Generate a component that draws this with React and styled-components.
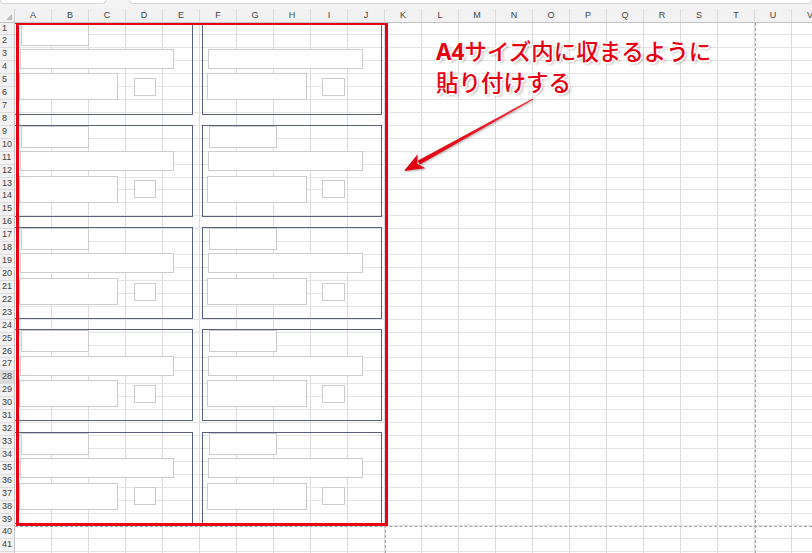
import React from 'react'
import styled, { createGlobalStyle } from 'styled-components'

const COLS = 'ABCDEFGHIJKLMNOPQRSTUV'.split('')
const ROWS = Array.from({ length: 41 }, (_, i) => i + 1)
const ROW_H = 12.93
const COL_W = 37

const GlobalStyle = createGlobalStyle`
  html, body {
    margin: 0;
    padding: 0;
    background: #fff;
  }
  body {
    font-family: "Liberation Sans", Arial, sans-serif;
    overflow: hidden;
  }
`

const Window = styled.div`
  width: 812px;
  height: 553px;
  overflow: hidden;
  background: #fff;
  display: flex;
  flex-direction: column;
`

const TopBar = styled.div`
  height: 9px;
  flex: none;
  background: #f3f3f3;
  display: flex;
  align-items: flex-start;
  gap: 23px;
`

const BarBox = styled.div`
  height: 3px;
  width: ${p => p.$w ? p.$w + 'px' : 'auto'};
  flex: ${p => p.$w ? 'none' : 1};
  background: #fff;
  border: 1px solid #d8d8d8;
  border-top: none;
  border-radius: 0 0 4px 4px;
`

const HeaderRow = styled.div`
  display: flex;
  height: 13.5px;
  flex: none;
  background: #f2f2f2;
  border-bottom: 1px solid #c4c4c4;
  box-sizing: border-box;
`

const Corner = styled.div`
  width: 15px;
  flex: none;
  position: relative;
  box-sizing: border-box;
  border-right: 1px solid #d2d2d2;

  &::after {
    content: '';
    position: absolute;
    right: 2px;
    bottom: 2px;
    border-left: 6px solid transparent;
    border-bottom: 6px solid #bcbcbc;
  }
`

const ColHead = styled.div`
  width: ${COL_W}px;
  flex: none;
  box-sizing: border-box;
  border-right: 1px solid #dadada;
  font-size: 9px;
  color: #444;
  display: flex;
  align-items: center;
  justify-content: center;
`

const Body = styled.div`
  display: flex;
  flex: 1;
  min-height: 0;
`

const RowHeader = styled.div`
  width: 15px;
  flex: none;
  background: #f2f2f2;
  border-right: 1px solid #c4c4c4;
  box-sizing: border-box;
  display: flex;
  flex-direction: column;
`

const RowNum = styled.div`
  height: ${ROW_H}px;
  flex: none;
  box-sizing: border-box;
  border-bottom: 1px solid #dcdcdc;
  font-size: 9px;
  line-height: ${ROW_H - 1}px;
  color: #444;
  padding-left: 2px;
  background: ${p => p.$active ? '#dadada' : 'transparent'};
`

const Cells = styled.div`
  flex: 1;
  position: relative;
  overflow: hidden;
  display: flex;
  flex-direction: column;
  background: repeating-linear-gradient(to right, transparent 0 36px, #dcdcdc 36px 37px);
`

const GridRow = styled.div`
  height: ${ROW_H}px;
  flex: none;
  box-sizing: border-box;
  border-bottom: 1px solid #e4e4e4;
`

const PageBreakV = styled.div`
  position: absolute;
  top: 0;
  bottom: 0;
  left: ${p => p.$x}px;
  border-left: 1px dashed #a4a4a4;
`

const PageBreakH = styled.div`
  position: absolute;
  left: 0;
  right: 0;
  top: ${p => p.$y}px;
  border-top: 1px dashed #a4a4a4;
`

const CardGrid = styled.div`
  position: absolute;
  left: -1.4px;
  top: 0;
  display: grid;
  grid-template-columns: repeat(2, 179.5px);
  grid-auto-rows: 92px;
  column-gap: 9px;
  row-gap: 10.3px;
`

const Card = styled.div`
  box-sizing: border-box;
  border: 1px solid #56627c;
  display: flex;
  flex-direction: column;
`

const Field = styled.div`
  box-sizing: border-box;
  flex: none;
  width: ${p => p.$w}px;
  height: ${p => p.$h}px;
  margin-left: ${p => p.$ml}px;
  margin-top: ${p => p.$mt || 0}px;
  background: #fff;
  border: 1px solid #cccccc;
  visibility: ${p => p.$hidden ? 'hidden' : 'visible'};
`

const FieldRow = styled.div`
  display: flex;
  align-items: center;
  margin-top: 4.7px;
`

const Frame = styled.div`
  position: absolute;
  left: 1px;
  top: -0.5px;
  width: 372px;
  height: 503.5px;
  box-sizing: border-box;
  border: 3px solid #e60012;
`

const Callout = styled.div`
  position: absolute;
  left: 421px;
  top: 13.5px;
  font-family: "Noto Sans CJK JP", "Noto Sans", sans-serif;
  font-size: 22.5px;
  line-height: 28.5px;
  font-weight: 500;
  color: #e60012;
  white-space: nowrap;
  text-shadow:
    1px 1px 0 #fff, -1px -1px 0 #fff, 1px -1px 0 #fff, -1px 1px 0 #fff,
    0 1.5px 0 #fff, 1.5px 0 0 #fff,
    2px 2px 3px rgba(0, 0, 0, 0.35);

  b {
    font-family: "Noto Sans", "Liberation Sans", sans-serif;
    font-weight: 700;
  }
`

const ArrowSvg = styled.svg`
  position: absolute;
  left: 380px;
  top: 67.5px;
  width: 150px;
  height: 90px;
  overflow: visible;
  filter: drop-shadow(1px 1.5px 1px rgba(0, 0, 0, 0.3));
`

const Arrow = () => (
  <ArrowSvg viewBox="0 0 150 90">
    <defs>
      <linearGradient id="ar" x1="1" y1="0" x2="0" y2="1">
        <stop offset="0" stopColor="#f0323a" />
        <stop offset="1" stopColor="#e00010" />
      </linearGradient>
    </defs>
    <polygon points="137.7,8.5 138.3,9.5 24.8,74.6 22.6,70.8" fill="url(#ar)" />
    <polygon points="9,81 30.4,78.2 22.1,73.7 22.6,64.3" fill="#e00010" />
  </ArrowSvg>
)

const TicketCard = ({ noLabel }) => (
  <Card>
    <Field $w={68} $h={22} $ml={6} $hidden={noLabel} />
    <Field $w={154.5} $h={20} $ml={5} $mt={3.3} />
    <FieldRow>
      <Field $w={99.5} $h={27} $ml={4} />
      <Field $w={22.5} $h={18} $ml={15.6} />
    </FieldRow>
  </Card>
)

const App = () => {
  return (
    <>
      <GlobalStyle />
      <Window>
        <TopBar>
          <BarBox $w={104} />
          <BarBox />
        </TopBar>
        <HeaderRow>
          <Corner />
          {COLS.map(c => <ColHead key={c}>{c}</ColHead>)}
        </HeaderRow>
        <Body>
          <RowHeader>
            {ROWS.map(r => <RowNum key={r} $active={r === 28}>{r}</RowNum>)}
          </RowHeader>
          <Cells>
            {ROWS.map(r => <GridRow key={r} />)}
            <PageBreakV $x={370} />
            <PageBreakV $x={740} />
            <PageBreakH $y={503.5} />
            <CardGrid>
              {Array.from({ length: 10 }, (_, i) => (
                <TicketCard key={i} noLabel={i === 1} />
              ))}
            </CardGrid>
            <Frame />
            <Callout>
              <b>A4</b>サイズ内に収まるように<br />
              貼り付けする
            </Callout>
            <Arrow />
          </Cells>
        </Body>
      </Window>
    </>
  )
}

export default App
